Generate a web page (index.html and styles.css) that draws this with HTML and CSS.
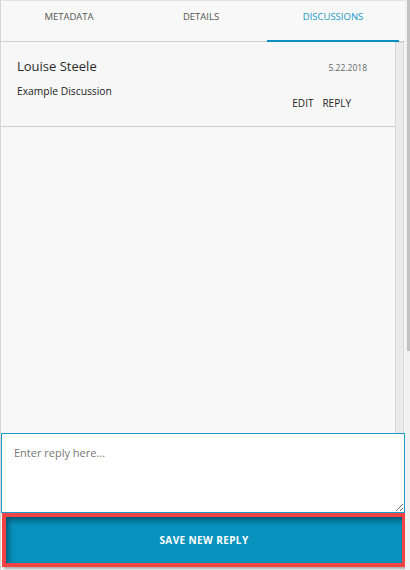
FILE: index.html
```html
<!DOCTYPE html>
<html>
<head>
<meta charset="utf-8">
<link rel="stylesheet" href="styles.css">
</head>
<body>
<div class="page">
  <div class="panel">
    <div class="tabs">
      <div class="tab">METADATA</div>
      <div class="tab">DETAILS</div>
      <div class="tab active">DISCUSSIONS</div>
    </div>
    <div class="main">
      <div class="list">
        <div class="card">
          <div class="card-head">
            <span class="name">Louise Steele</span>
            <span class="date">5.22.2018</span>
          </div>
          <div class="body">Example Discussion</div>
          <div class="actions"><span>EDIT</span><span>REPLY</span></div>
        </div>
      </div>
      <div class="vscroll"></div>
    </div>
    <textarea class="reply" placeholder="Enter reply here..."></textarea>
    <button class="save">SAVE NEW REPLY</button>
  </div>
  <div class="outer-bar"><div class="thumb"></div></div>
</div>
</body>
</html>
```

FILE: styles.css
```css
html, body {
  margin: 0;
  padding: 0;
  background: #f2f2f2;
  font-family: "Open Sans", "DejaVu Sans", sans-serif;
}
.page {
  display: flex;
  width: 410px;
  height: 570px;
  overflow: hidden;
}
.panel {
  width: 405px;
  height: 570px;
  border-left: 1px solid #d6d6d6;
  border-top: 1px solid #e2e2e2;
  background: #f8f8f8;
  display: flex;
  flex-direction: column;
  box-sizing: border-box;
}
.tabs {
  display: flex;
  padding-left: 2px;
  height: 40px;
  border-bottom: 1px solid #cfcfcf;
}
.tab {
  position: relative;
  width: 132px;
  text-align: center;
  font-size: 9.5px;
  line-height: 12px;
  padding-top: 10px;
  color: #555;
}
.tab.active {
  color: #1a98c6;
}
.tab.active::after {
  content: "";
  position: absolute;
  left: 0;
  right: 0;
  bottom: -1px;
  height: 2px;
  background: #0a90be;
}
.main {
  display: flex;
  height: 391px;
}
.list {
  flex: 1;
}
.card {
  padding: 16px 28px 17px 16px;
  border-bottom: 1px solid #cecece;
  background: #f7f7f7;
}
.card-head {
  display: flex;
  justify-content: space-between;
  align-items: baseline;
  height: 16px;
}
.name {
  font-size: 13px;
  line-height: 16px;
  color: #2b2b2b;
}
.date {
  font-size: 8.5px;
  color: #666;
}
.body {
  margin-top: 11px;
  font-size: 10.3px;
  line-height: 12px;
  color: #222;
}
.actions {
  display: flex;
  justify-content: flex-end;
  gap: 9px;
  margin-right: 16px;
  font-size: 10px;
  line-height: 12px;
  color: #222;
}
.vscroll {
  width: 7px;
  margin-right: 1px;
  border: 1px solid #d8d8d8;
  border-bottom: none;
  background: #ebebeb;
}
.reply {
  display: block;
  box-sizing: border-box;
  width: 404px;
  height: 80px;
  margin: 0;
  border: 1px solid #1a9bc9;
  outline: none;
  background: #fff;
  padding: 12px 12px;
  font-family: "Open Sans", "DejaVu Sans", sans-serif;
  font-size: 11px;
  line-height: 14px;
  color: #333;
  resize: vertical;
}
.reply::placeholder {
  color: #777;
}
.save {
  box-sizing: border-box;
  margin: 0 0 0 1px;
  width: 404px;
  height: 54px;
  border: 4px solid #f24444;
  background: #0892be;
  color: #fff;
  font-family: "Open Sans", "DejaVu Sans", sans-serif;
  font-weight: bold;
  font-size: 10px;
  letter-spacing: 0.4px;
  box-shadow: inset 3px 4px 6px -1px rgba(0, 0, 0, 0.45), 2px 2px 2px rgba(0, 0, 0, 0.3);
  padding: 0;
}
.outer-bar {
  width: 5px;
  height: 570px;
  display: flex;
  justify-content: flex-end;
  background: #f1f1f1;
}
.thumb {
  width: 3px;
  height: 351px;
  background: #c2c2c2;
}
```
